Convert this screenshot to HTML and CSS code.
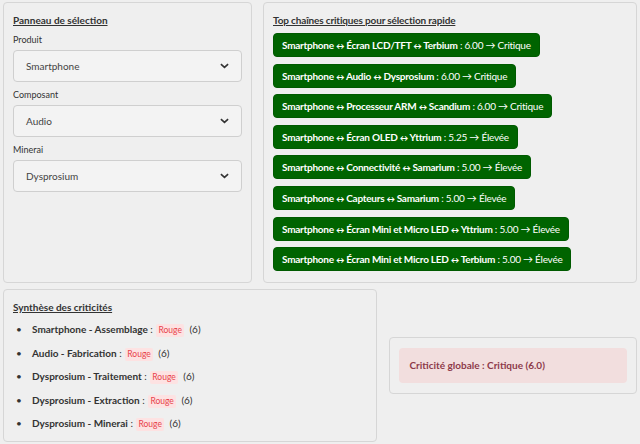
FILE: index.html
```html
<!DOCTYPE html>
<html lang="fr">
<head>
<meta charset="utf-8">
<link rel="stylesheet" href="styles.css">
</head>
<body>
<div class="row row-top">
  <div class="panel panel-select">
    <h4 class="title">Panneau de sélection</h4>
    <label class="lbl">Produit</label>
    <div class="select"><span>Smartphone</span><svg class="chev" viewBox="0 0 10 6" width="9" height="6"><path d="M1 1l4 3.6L9 1" fill="none" stroke="#333" stroke-width="1.8"/></svg></div>
    <label class="lbl">Composant</label>
    <div class="select"><span>Audio</span><svg class="chev" viewBox="0 0 10 6" width="9" height="6"><path d="M1 1l4 3.6L9 1" fill="none" stroke="#333" stroke-width="1.8"/></svg></div>
    <label class="lbl">Minerai</label>
    <div class="select"><span>Dysprosium</span><svg class="chev" viewBox="0 0 10 6" width="9" height="6"><path d="M1 1l4 3.6L9 1" fill="none" stroke="#333" stroke-width="1.8"/></svg></div>
  </div>
  <div class="panel panel-top">
    <h4 class="title">Top chaînes critiques pour sélection rapide</h4>
    <div class="btns">
      <button class="btn"><b>Smartphone <i>↔</i> Écran LCD/TFT <i>↔</i> Terbium</b> : 6.00 → Critique</button>
      <button class="btn"><b>Smartphone <i>↔</i> Audio <i>↔</i> Dysprosium</b> : 6.00 → Critique</button>
      <button class="btn"><b>Smartphone <i>↔</i> Processeur ARM <i>↔</i> Scandium</b> : 6.00 → Critique</button>
      <button class="btn"><b>Smartphone <i>↔</i> Écran OLED <i>↔</i> Yttrium</b> : 5.25 → Élevée</button>
      <button class="btn"><b>Smartphone <i>↔</i> Connectivité <i>↔</i> Samarium</b> : 5.00 → Élevée</button>
      <button class="btn"><b>Smartphone <i>↔</i> Capteurs <i>↔</i> Samarium</b> : 5.00 → Élevée</button>
      <button class="btn"><b>Smartphone <i>↔</i> Écran Mini et Micro LED <i>↔</i> Yttrium</b> : 5.00 → Élevée</button>
      <button class="btn"><b>Smartphone <i>↔</i> Écran Mini et Micro LED <i>↔</i> Terbium</b> : 5.00 → Élevée</button>
    </div>
  </div>
</div>
<div class="row row-bottom">
  <div class="panel panel-synth">
    <h4 class="title">Synthèse des criticités</h4>
    <ul class="list">
      <li><b>Smartphone - Assemblage</b> : <span class="badge">Rouge</span> (6)</li>
      <li><b>Audio - Fabrication</b> : <span class="badge">Rouge</span> (6)</li>
      <li><b>Dysprosium - Traitement</b> : <span class="badge">Rouge</span> (6)</li>
      <li><b>Dysprosium - Extraction</b> : <span class="badge">Rouge</span> (6)</li>
      <li><b>Dysprosium - Minerai</b> : <span class="badge">Rouge</span> (6)</li>
    </ul>
  </div>
  <div class="panel panel-global">
    <div class="alert">Criticité globale : Critique (6.0)</div>
  </div>
</div>
</body>
</html>
```
FILE: styles.css
```css
* { box-sizing: border-box; }
html, body { margin: 0; padding: 0; }
body {
  background: #efefef;
  font-family: Lato, "Liberation Sans", sans-serif;
  color: #333;
  width: 640px;
  height: 444px;
  overflow: hidden;
  padding: 2px 3px 0 3px;
}
.row { display: flex; }
.row-top { gap: 11px; align-items: stretch; height: 281px; }
.row-bottom { margin-top: 6px; gap: 12px; align-items: center; }
.panel {
  background: #efefef;
  border: 1px solid #d6d6d6;
  border-radius: 4px;
  padding: 10px 9px;
}
.panel-select { width: 249px; display: flex; flex-direction: column; }
.panel-top { width: 374px; }
.panel-synth { width: 375px; height: 153px; }
.panel-global { width: 248px; height: 57px; padding: 10px 9px; }
.title {
  margin: 0;
  font-size: 10px;
  font-weight: bold;
  text-decoration: underline;
  color: #333;
  line-height: 14px;
}
.panel-top .title { letter-spacing: -0.15px; }
.lbl {
  font-size: 9px;
  color: #333;
  margin-top: 7px;
  margin-bottom: 4px;
  line-height: 12px;
}
.select {
  height: 32px;
  flex: none;
  border: 1px solid #cfcfcf;
  border-radius: 4px;
  background: #f3f3f3;
  display: flex;
  align-items: center;
  justify-content: space-between;
  padding: 0 12px 0 12px;
  font-size: 10px;
  color: #444;
}
.chev { display: block; }
.btns { display: flex; flex-direction: column; align-items: flex-start; gap: 6.6px; margin-top: 6px; }
.btn {
  background: #006400;
  color: #fff;
  border: 1px solid #005a00;
  border-radius: 4px;
  font-family: inherit;
  font-size: 10px;
  letter-spacing: -0.25px;
  height: 24px;
  padding: 0 8px;
  line-height: 22px;
  white-space: nowrap;
}
.btn b { font-weight: bold; }
.btn i { font-style: normal; font-size: 8.5px; letter-spacing: -0.5px; }
.list {
  list-style: none;
  margin: 8px 0 0 0;
  padding: 0;
  font-size: 10px;
  color: #333;
}
.list li { line-height: 14px; height: 14px; margin-bottom: 9px; display: flex; align-items: center; white-space: pre; }
.list li:nth-child(odd) { margin-bottom: 10px; }
.list li::before { content: "•"; width: 16px; padding-left: 3px; font-size: 10px; }
.badge {
  display: inline-block;
  background: #fde2e2;
  color: #e8424a;
  font-size: 8.5px;
  line-height: 13px;
  padding: 0 2px;
  border-radius: 2px;
  margin: 2px 3px 0 1px;
}
.alert {
  background: #f2dede;
  color: #8d3a4a;
  font-weight: bold;
  font-size: 10px;
  border-radius: 4px;
  height: 35px;
  line-height: 35px;
  padding: 0 10px;
}
```
